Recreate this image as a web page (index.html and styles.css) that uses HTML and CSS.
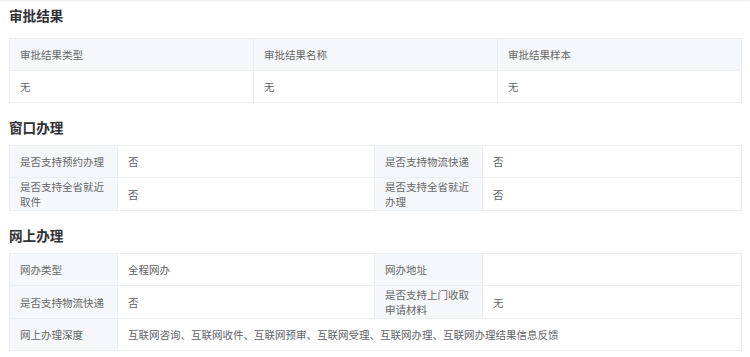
FILE: index.html
```html
<!DOCTYPE html>
<html lang="zh-CN">
<head>
<meta charset="utf-8">
<title>办事指南</title>
<link rel="stylesheet" href="styles.css">
</head>
<body>
<div class="topline"></div>
<main class="page">
  <section class="section">
    <h3 class="section-title first">审批结果</h3>
    <table class="grid">
      <colgroup><col class="c3"><col class="c3"><col class="c3"></colgroup>
      <thead>
        <tr><th>审批结果类型</th><th>审批结果名称</th><th>审批结果样本</th></tr>
      </thead>
      <tbody>
        <tr><td>无</td><td>无</td><td>无</td></tr>
      </tbody>
    </table>
  </section>

  <section class="section">
    <h3 class="section-title">窗口办理</h3>
    <table class="grid">
      <colgroup><col class="lab"><col class="val"><col class="lab"><col class="val2"></colgroup>
      <tbody>
        <tr><th>是否支持预约办理</th><td>否</td><th>是否支持物流快递</th><td>否</td></tr>
        <tr><th>是否支持全省就近取件</th><td>否</td><th>是否支持全省就近办理</th><td>否</td></tr>
      </tbody>
    </table>
  </section>

  <section class="section">
    <h3 class="section-title">网上办理</h3>
    <table class="grid">
      <colgroup><col class="lab"><col class="val"><col class="lab"><col class="val2"></colgroup>
      <tbody>
        <tr><th>网办类型</th><td>全程网办</td><th>网办地址</th><td></td></tr>
        <tr><th>是否支持物流快递</th><td>否</td><th>是否支持上门收取申请材料</th><td>无</td></tr>
        <tr><th>网上办理深度</th><td colspan="3">互联网咨询、互联网收件、互联网预审、互联网受理、互联网办理、互联网办理结果信息反馈</td></tr>
      </tbody>
    </table>
  </section>
</main>
</body>
</html>
```

FILE: styles.css
```css
html, body {
  margin: 0;
  padding: 0;
  background: #ffffff;
}

body {
  font-family: "Noto Sans CJK SC", "Noto Sans", "Liberation Sans", sans-serif;
  color: #606266;
}

.topline {
  height: 2px;
  background: linear-gradient(#eeeeee, #fbfbfb);
}

.page {
  padding: 0 9px;
}

.section-title {
  margin: 14px 0 8px;
  font-size: 13.6px;
  line-height: 20px;
  height: 20px;
  font-weight: 700;
  color: #303133;
}

.section-title.first {
  margin: 3px 0 13px;
}

.grid {
  width: 732px;
  table-layout: fixed;
  border-collapse: collapse;
  font-size: 10.5px;
  line-height: 15px;
}

.grid col.c3 { width: 244px; }
.grid col.lab { width: 108px; }
.grid col.val { width: 257px; }
.grid col.val2 { width: 259px; }

.grid th,
.grid td {
  height: 32px;
  box-sizing: border-box;
  padding: 1px 10px;
  border: 1px solid #ebeef5;
  text-align: left;
  vertical-align: middle;
  font-weight: 400;
}

.grid th {
  background: #f5f7fa;
  color: #666666;
}

.grid td {
  background: #ffffff;
  color: #606266;
}
```
